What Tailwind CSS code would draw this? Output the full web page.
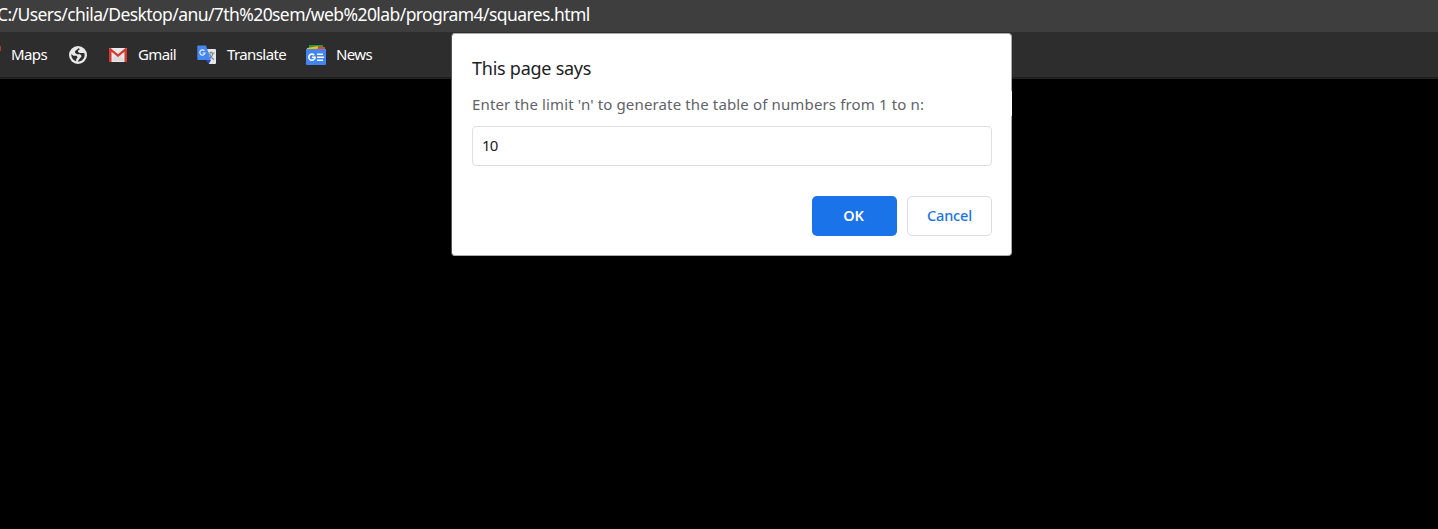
<!DOCTYPE html>
<html lang="en">
<head>
<meta charset="utf-8">
<title>squares.html</title>
<script src="https://cdn.jsdelivr.net/npm/@tailwindcss/browser@4"></script>
</head>
<body class="h-[529px] w-[1438px] overflow-hidden bg-black font-['Noto_Sans',sans-serif] whitespace-nowrap">
<header>
  <div class="flex h-8 items-center overflow-hidden bg-[#3e3e3e] pb-[3px] text-[17.5px] tracking-[-0.58px] text-white"><span class="-ml-[3px]">C:/Users/chila/Desktop/anu/7th%20sem/web%20lab/program4/squares.html</span></div>
  <nav class="flex h-[47px] items-center border-b-2 border-[#202020] bg-[#2d2d2d] text-[15px] tracking-[-0.6px] text-white">
    <div class="flex w-[69px] items-center"><span class="mr-[10px] -mt-3 h-[5px] w-px bg-[#a83c32]"></span><span>Maps</span></div>
    <svg class="mr-[22px] h-[18px] w-[18px] shrink-0" viewBox="0 0 18 18"><circle cx="9" cy="9" r="9" fill="#e9e9e9"/><path d="M9.5 2.2 6 5.2v1.5L8 8.3h3l1.4 1.3v1.2l-1.6 1.7-2.2 3c4 .2 7-2.8 7-6.5 0-.8-.1-1.4-.4-2H10.6L9 5.8v-1l2-1.9ZM2.3 8c-.2 3.6 1.8 6.3 4.9 7.3v-2.2l1.4-1.6-1-1.8H4.4Z" fill="#2d2d2d"/></svg>
    <div class="flex w-[88px] items-center gap-[11px]">
      <svg class="h-[14px] w-[18px] shrink-0" viewBox="0 0 18 14"><rect width="18" height="14" rx="1.2" fill="#e9e9e9"/><path d="m2 13 5-6 2 1.5L11 7l5 6Z" fill="#dcdcdc"/><path d="M0 14V1.5C0 .5.6 0 1.5 0L9 6.3 16.5 0c.9 0 1.5.5 1.5 1.5V14h-2.5V3.7L9 9.1 2.5 3.7V14Z" fill="#d9362e"/></svg>
      <span>Gmail</span>
    </div>
    <div class="flex w-[109px] items-center gap-[10px]">
      <svg class="h-5 w-5 shrink-0" viewBox="0 0 20 20"><path d="M8 4h10q1 0 1 1v13q0 1-1 1h-6Z" fill="#e4e6e8"/><path d="M11 8h6.5M14 6.5V8M16 8q-.7 4-4.5 6M12.5 9q1 3.5 4.5 5.5" fill="none" stroke="#69838b" stroke-width="1.1"/><path d="M9 15h5l-2.2 4Z" fill="#3442b8"/><path d="M1.3.5H9L13.8 15H1.3Q.3 15 .3 14V1.5Q.3.5 1.3.5Z" fill="#4587f0"/><path d="M7.4 5.8A2.6 2.6 0 1 0 8 8H5.7" fill="none" stroke="#e9f0fd" stroke-width="1.2"/></svg>
      <span>Translate</span>
    </div>
    <div class="flex items-center gap-[10px]">
      <svg class="h-5 w-5 shrink-0" viewBox="0 0 20 20"><path d="M3 0h14v5H3Z" fill="#23984d"/><path d="m1 3 11-2 1 5H1Z" fill="#fbbc04"/><path d="M12 2h7v4h-8Z" fill="#ed4131"/><path d="M0 4h20v15q0 1-1 1H1q-1 0-1-1Z" fill="#4285f4"/><path d="M8.2 10.1A3.1 3.1 0 1 0 9 12.3H6" fill="none" stroke="#fff" stroke-width="1.6"/><path d="M11 9.2h6M11 12.2h7M11 15.2h6" stroke="#fff" stroke-width="1.6"/></svg>
      <span>News</span>
    </div>
  </nav>
</header>
<section role="dialog" class="absolute top-[33px] left-[451px] h-[223px] w-[561px] rounded-[4px] border border-[#aaa] border-l-[#555] bg-white px-5 pt-[21px]">
  <h1 class="h-[26px] text-[18px] leading-[26px] tracking-[-0.25px] text-[#202124]"><span>This page says</span></h1>
  <p class="mt-[11px] h-6 text-[15px] leading-6 tracking-[0.14px] text-[#5f6368]"><span>Enter the limit 'n' to generate the table of numbers from 1 to n:</span></p>
  <div class="mt-[10px] flex h-10 w-[520px] items-center rounded-[4px] border border-[#dddfe3] px-[9px] pb-0.5 text-[15px] tracking-[-0.8px] text-[#202124]">10</div>
  <div class="mt-[30px] flex w-[520px] justify-end gap-[10px] text-[14.5px]">
    <button class="h-10 w-[85px] rounded-[5px] bg-[#1a73e8] pr-0.5 font-semibold tracking-[-0.2px] text-white">OK</button>
    <button class="h-10 w-[85px] rounded-[5px] border border-[#dadce0] font-medium tracking-[-0.2px] text-[#1a73e8]">Cancel</button>
  </div>
  <span class="absolute top-[57px] -right-px h-[25px] w-px bg-white"></span>
</section>
</body>
</html>
